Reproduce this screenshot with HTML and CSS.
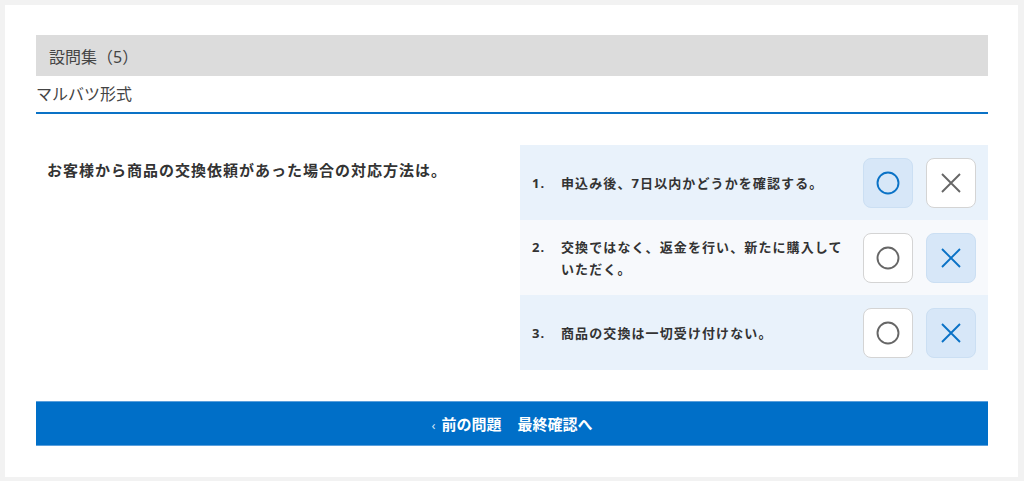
FILE: index.html
```html
<!DOCTYPE html>
<html>
<head>
	<meta charset="utf-8">
	<title>設問集</title>
	<link rel="stylesheet" href="styles.css">
</head>
<body>
<div class="panel">
	<h2 class="set-title">設問集（5）</h2>
	<p class="set-type">マルバツ形式</p>
	<div class="quiz">
		<p class="question">お客様から商品の交換依頼があった場合の対応方法は。</p>
		<ul class="options">
			<li class="odd">
				<div class="label">
					<span class="num">1.</span>
					<span class="txt">申込み後、7日以内かどうかを確認する。</span>
				</div>
				<div class="btns">
					<button class="btn on"><svg viewBox="0 0 24 24"><circle cx="12" cy="12" r="10.5"/></svg></button>
					<button class="btn"><svg viewBox="0 0 24 24"><path d="M3 3L21 21M21 3L3 21"/></svg></button>
				</div>
			</li>
			<li>
				<div class="label">
					<span class="num">2.</span>
					<span class="txt">交換ではなく、返金を行い、新たに購入していただく。</span>
				</div>
				<div class="btns">
					<button class="btn"><svg viewBox="0 0 24 24"><circle cx="12" cy="12" r="10.5"/></svg></button>
					<button class="btn on"><svg viewBox="0 0 24 24"><path d="M3 3L21 21M21 3L3 21"/></svg></button>
				</div>
			</li>
			<li class="odd">
				<div class="label">
					<span class="num">3.</span>
					<span class="txt">商品の交換は一切受け付けない。</span>
				</div>
				<div class="btns">
					<button class="btn"><svg viewBox="0 0 24 24"><circle cx="12" cy="12" r="10.5"/></svg></button>
					<button class="btn on"><svg viewBox="0 0 24 24"><path d="M3 3L21 21M21 3L3 21"/></svg></button>
				</div>
			</li>
		</ul>
	</div>
	<div class="nav-bar">
		<span class="prev"><i>‹</i>前の問題</span>
		<span class="next">最終確認へ</span>
	</div>
</div>
</body>
</html>
```

FILE: styles.css
```css
*{
	margin: 0;
	padding: 0;
	list-style: none;
	box-sizing: border-box;
}
body{
	background: #f2f2f2;
	padding: 5px 6px 4px 5px;
	font-family: "Noto Sans", "Noto Sans CJK JP", sans-serif;
	color: #333;
}
.panel{
	background: #fff;
	padding: 30px 30px 31px 31px;
}
.set-title{
	height: 41px;
	line-height: 44px;
	background: #dcdcdc;
	padding-left: 13px;
	font-size: 16px;
	font-weight: normal;
	color: #444;
}
.set-type{
	height: 38px;
	line-height: 36px;
	font-size: 16px;
	color: #444;
	border-bottom: 2px solid #0a72c6;
}
.quiz{
	display: flex;
	justify-content: space-between;
	margin-top: 31px;
}
.question{
	padding: 13px 0 0 11px;
	font-size: 15px;
	line-height: 24px;
	font-weight: bold;
	letter-spacing: 1px;
	color: #333;
}
.options{
	width: 468px;
}
.options li{
	height: 75px;
	display: flex;
	align-items: center;
	padding: 0 12px;
	background: #f7f9fc;
	font-size: 13px;
	font-weight: bold;
	line-height: 22px;
	letter-spacing: 1.1px;
	color: #333;
}
.options li.odd{
	background: #e9f2fb;
}
.label{
	flex: 1;
	display: flex;
	align-items: flex-start;
	padding-right: 12px;
}
.num{
	width: 29px;
	flex-shrink: 0;
}
.txt{
	flex: 1;
}
.btns{
	display: flex;
	gap: 13px;
	flex-shrink: 0;
}
.btn{
	width: 50px;
	height: 50px;
	border: 1px solid #d4d4d4;
	border-radius: 8px;
	background: #fff;
	display: flex;
	align-items: center;
	justify-content: center;
}
.btn svg{
	width: 24px;
	height: 24px;
	fill: none;
	stroke: #666;
	stroke-width: 1.9;
}
.btn.on{
	background: #d7e7f8;
	border-color: #cbdff3;
}
.btn.on svg{
	stroke: #0a72c6;
}
.nav-bar{
	margin-top: 31px;
	height: 45px;
	background: #006fc8;
	border-top: 1px solid #5a9fdc;
	border-bottom: 1px solid #5a9fdc;
	display: flex;
	align-items: center;
	justify-content: center;
	gap: 16px;
	color: #fff;
	font-size: 15px;
	font-weight: bold;
}
.prev i{
	font-style: normal;
	font-weight: normal;
	font-size: 13px;
	color: #cfe3f5;
	margin-right: 6px;
}
```
